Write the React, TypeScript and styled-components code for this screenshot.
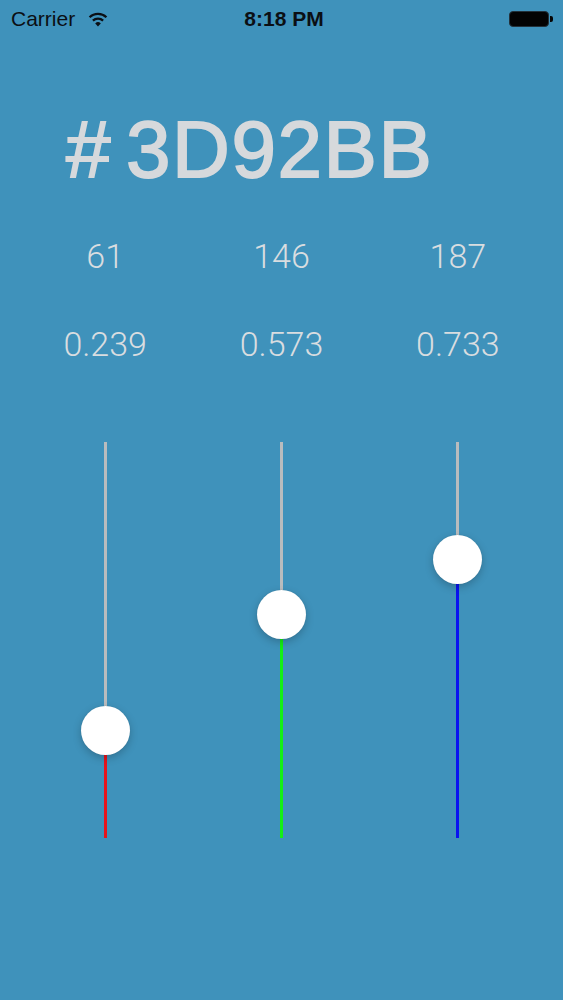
import * as React from 'react';
import styled, { createGlobalStyle } from 'styled-components';

const GlobalStyle = createGlobalStyle`
    html, body {
        margin: 0;
        padding: 0;
        background: #3f92bb;
    }
`

const channels = [
    { value: 61, color: '#e8141c' },
    { value: 146, color: '#14f014' },
    { value: 187, color: '#0a14f0' },
];

const TRAVEL = 347;

const Screen = styled.div`
    width: 563px;
    height: 1000px;
    background: #3f92bb;
    font-family: "Liberation Sans", Arial, sans-serif;
    overflow: hidden;
`

const StatusBar = styled.div`
    height: 38px;
    display: grid;
    grid-template-columns: 1fr auto 1fr;
    align-items: center;
    padding: 0 10px 0 11px;
    color: #0b0f14;
`

const Carrier = styled.div`
    display: flex;
    align-items: center;
    gap: 13px;
    font-size: 21px;
`

const Clock = styled.div`
    font-size: 21px;
    font-weight: bold;
    padding-left: 4px;
`

const Battery = styled.div`
    justify-self: end;
    display: flex;
    align-items: center;
`

const BatteryBody = styled.div`
    width: 38px;
    height: 14px;
    border: 1px solid #23313a;
    border-radius: 4px;
    background: #030303;
`

const BatteryNub = styled.div`
    width: 3px;
    height: 6px;
    margin-left: 1px;
    border-radius: 0 2px 2px 0;
    background: #050505;
`

const Title = styled.h1`
    margin: 72px 0 0 0;
    padding-left: 66px;
    font-size: 80px;
    line-height: 80px;
    font-weight: normal;
    color: #d6d9dc;
    -webkit-text-stroke: 1.8px #d6d9dc;
    letter-spacing: 1.6px;
    word-spacing: -10px;
`

const Values = styled.div`
    margin-top: 46px;
    display: grid;
    grid-template-columns: repeat(3, 1fr);
    row-gap: 48px;
    padding: 0 17px;
`

const Value = styled.div`
    height: 40px;
    line-height: 40px;
    text-align: center;
    font-family: Roboto, "Liberation Sans", sans-serif;
    font-weight: 300;
    font-size: 34px;
    color: #d9dde0;
`

const Sliders = styled.div`
    margin-top: 78px;
    display: grid;
    grid-template-columns: repeat(3, 1fr);
    padding: 0 17px;
`

const SliderColumn = styled.div`
    display: flex;
    flex-direction: column;
    align-items: center;
`

const Track = styled.div<{ $color: string }>`
    width: 3px;
    background: ${(p) => p.$color};
`

const Thumb = styled.div`
    width: 49px;
    height: 49px;
    border-radius: 50%;
    background: #ffffff;
    box-shadow: 0 3px 8px rgba(0, 0, 0, 0.22), 0 0 1px rgba(0, 0, 0, 0.15);
    position: relative;
    z-index: 1;
`

const Wifi = () => (
    <svg width="20" height="15" viewBox="0 0 20 15">
        <path d="M10 14.5 L7.2 11.4 A4 4 0 0 1 12.8 11.4 Z" fill="#0b0f14" />
        <path d="M4.9 8.6 A7.4 7.4 0 0 1 15.1 8.6" stroke="#0b0f14" strokeWidth="2.3" fill="none" />
        <path d="M1.6 5.3 A12 12 0 0 1 18.4 5.3" stroke="#0b0f14" strokeWidth="2.3" fill="none" />
    </svg>
)

const Slider = ({ value, color }: { value: number; color: string }) => {
    const ratio = value / 255;
    return (
        <SliderColumn>
            <Track $color="#b9bcbe" style={{ height: (1 - ratio) * TRAVEL }} />
            <Thumb />
            <Track $color={color} style={{ height: ratio * TRAVEL }} />
        </SliderColumn>
    );
}

export default function App() {
    const hex = channels.map((c) => c.value.toString(16).toUpperCase().padStart(2, '0')).join('');
    return (
        <Screen>
            <GlobalStyle />
            <StatusBar>
                <Carrier>Carrier <Wifi /></Carrier>
                <Clock>8:18 PM</Clock>
                <Battery>
                    <BatteryBody />
                    <BatteryNub />
                </Battery>
            </StatusBar>
            <Title># {hex}</Title>
            <Values>
                {channels.map((c) => <Value key={'i' + c.value}>{c.value}</Value>)}
                {channels.map((c) => <Value key={'f' + c.value}>{(c.value / 255).toFixed(3)}</Value>)}
            </Values>
            <Sliders>
                {channels.map((c) => <Slider key={c.value} value={c.value} color={c.color} />)}
            </Sliders>
        </Screen>
    );
}
